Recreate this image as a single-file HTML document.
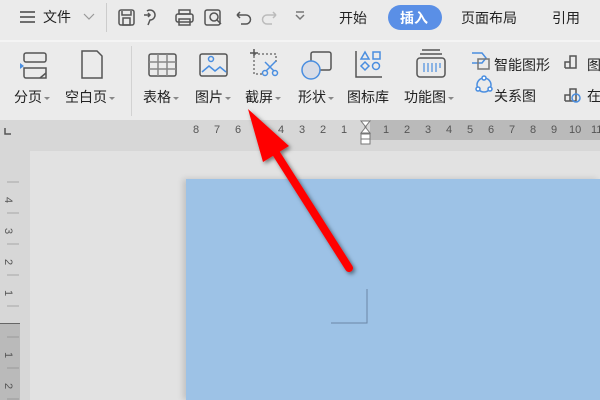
<!DOCTYPE html>
<html><head><meta charset="utf-8"><style>
*{margin:0;padding:0;box-sizing:border-box}
body{width:600px;height:400px;overflow:hidden;background:#e2e2e2;font-family:"Liberation Sans","Noto Sans CJK SC",sans-serif;position:relative;color:#333}
.a{position:absolute}
.t{font-size:14px;color:#222;white-space:nowrap}
.s{font-size:14px;color:#222;white-space:nowrap}
.n{font-size:11px;color:#555}
.dd{display:inline-block;width:0;height:0;border-left:3px solid transparent;border-right:3px solid transparent;border-top:3px solid #888;vertical-align:middle;margin-left:2px}
</style></head><body>
<div class="a" style="left:0;top:0;width:600px;height:40px;background:#ebebeb"></div>
<div class="a" style="left:0;top:40px;width:600px;height:2px;background:#f4f4f4"></div>
<div class="a" style="left:0;top:42px;width:600px;height:78px;background:#ebebeb"></div>
<div class="a" style="left:106px;top:3px;width:1px;height:29px;background:#ccc"></div>
<div class="a" style="left:131px;top:46px;width:1px;height:70px;background:#d2d2d2"></div>
<!-- top row -->
<svg class="a" style="left:18px;top:9px" width="20" height="16"><path d="M2 3h15M2 8h15M2 13h15" stroke="#444" stroke-width="1.5"/></svg>
<div class="a t" style="left:43px;top:7px">文件</div>
<svg class="a" style="left:82px;top:11px" width="14" height="10"><path d="M2 3l5 5 5-5" stroke="#999" fill="none" stroke-width="1.2"/></svg>
<svg class="a" style="left:116px;top:7px" width="200" height="22" fill="none" stroke="#555" stroke-width="1.5">
<rect x="3" y="3" width="15" height="15" rx="2"/><rect x="7" y="11" width="7" height="7"/><path d="M6 4v4h9V4"/>
<path d="M31 4a5 5 0 1 1 3 9l-2 5M28 8h6m-2-2 2 2-2 2"/>
<rect x="60" y="7" width="17" height="8" rx="2"/><rect x="63" y="3" width="11" height="4"/><rect x="63" y="12" width="11" height="6"/>
<rect x="89" y="3" width="15" height="15" rx="2"/><circle cx="98" cy="10" r="4"/><path d="M101 13l4 4"/>
<path d="M121 8h9a4 4 0 0 1 0 9h-5M121 8l3-3M121 8l3 3"/>
<path stroke="#bbb" d="M160 8h-9a4 4 0 0 0 0 9h5M160 8l-3-3M160 8l-3 3"/>
<path stroke="#777" d="M180 8l4 4 4-4M180 5h8"/>
</svg>
<div class="a t" style="left:339px;top:8px">开始</div>
<div class="a" style="left:388px;top:5px;width:54px;height:25px;border-radius:13px;background:#5a8fe6"></div>
<div class="a t" style="left:400px;top:8px;color:#fff;font-weight:bold">插入</div>
<div class="a t" style="left:461px;top:8px">页面布局</div>
<div class="a t" style="left:552px;top:8px">引用</div>
<!-- ribbon icons -->
<svg class="a" style="left:0;top:46px" width="600" height="70" fill="none" stroke="#555" stroke-width="1.5">
<path d="M20 17l4 3-4 3z" fill="#4a8ee0" stroke="none"/>
<rect x="24" y="7" width="22" height="9" rx="2"/><path d="M24 22h22v10H26a2 2 0 0 1-2-2z"/><path d="M40 32l6-5" />
<path d="M82 5h15l5 5v22H82z"/>
<rect x="149" y="8" width="27" height="22" rx="2"/><path d="M149 16h27M149 23h27M158 8v22M167 8v22" stroke="#888"/>
<rect x="200" y="8" width="27" height="22" rx="2"/><circle cx="211" cy="13" r="2.5" stroke="#4a8ee0"/><path d="M202 26l7-6 6 5 5-4 6 5" stroke="#4a8ee0"/>
<path d="M254 8h22v9M254 10v18h9" stroke="#777" stroke-dasharray="2 2"/><path d="M254 3v7M250 7h8" stroke="#555"/>
<circle cx="265" cy="27" r="2.5" stroke="#4a8ee0"/><circle cx="275" cy="27" r="2.5" stroke="#4a8ee0"/><path d="M266 25l10-10M274 25l-9-9" stroke="#4a8ee0"/>
<rect x="311" y="6" width="20" height="18" rx="2"/><circle cx="311" cy="24" r="9" fill="#d8dce6" stroke="#4a8ee0"/>
<path d="M356 5v26h26" /><path d="M361 13l4-7 4 7z M373 6h7v7h-7z M365 16l4 4-4 4-4-4z" stroke="#4a8ee0"/><circle cx="376" cy="20" r="3.5" stroke="#4a8ee0"/>
<rect x="417" y="12" width="28" height="19" rx="3"/><path d="M420 8h22M422 4h18"/><path d="M424 17v9M428 17v9M432 17v9M436 17v9M440 17v5" stroke="#4a8ee0" stroke-width="1.2"/>
<path d="M472 7h10l4 5-4 5h-10" stroke="#4a8ee0"/><rect x="478" y="13" width="11" height="10" stroke="#777"/>
<circle cx="484" cy="39" r="7" stroke="#4a8ee0"/><circle cx="484" cy="32" r="2" fill="#fff" stroke="#4a8ee0"/><circle cx="478" cy="43" r="2" fill="#fff" stroke="#4a8ee0"/><circle cx="490" cy="43" r="2" fill="#fff" stroke="#4a8ee0"/>
<path d="M565 22v-6h5v6M570 22V10h6v12h-11"/>
<path d="M565 55v-6h5v6M570 55V43h6v12h-11"/><circle cx="576" cy="52" r="4" stroke="#4a8ee0"/>
</svg>
<div class="a s" style="left:14px;top:87px">分页<span class="dd"></span></div>
<div class="a s" style="left:65px;top:87px">空白页<span class="dd"></span></div>
<div class="a s" style="left:143px;top:87px">表格<span class="dd"></span></div>
<div class="a s" style="left:195px;top:87px">图片<span class="dd"></span></div>
<div class="a s" style="left:245px;top:87px">截屏<span class="dd"></span></div>
<div class="a s" style="left:298px;top:87px">形状<span class="dd"></span></div>
<div class="a s" style="left:347px;top:87px">图标库</div>
<div class="a s" style="left:404px;top:87px">功能图<span class="dd"></span></div>
<div class="a s" style="left:494px;top:55px">智能图形</div>
<div class="a s" style="left:494px;top:86px">关系图</div>
<div class="a s" style="left:587px;top:55px">图</div>
<div class="a s" style="left:587px;top:86px">在</div>
<!-- rulers -->
<div class="a" style="left:0;top:120px;width:600px;height:31px;background:#d7d7d7"></div>
<div class="a" style="left:370px;top:120px;width:230px;height:20px;background:#bababa"></div>
<div class="a" style="left:0;top:151px;width:30px;height:249px;background:#d7d7d7"></div>
<div class="a" style="left:0;top:323px;width:20px;height:77px;background:#bababa;border-top:1px solid #666"></div>
<svg class="a" style="left:4px;top:128px" width="8" height="8"><path d="M1 0v6h6" stroke="#555" stroke-width="1.5" fill="none"/></svg>
<div class="a n" style="left:193px;top:124px">8</div><div class="a n" style="left:214px;top:124px">7</div><div class="a n" style="left:235px;top:124px">6</div>
<div class="a n" style="left:278px;top:124px">4</div><div class="a n" style="left:299px;top:124px">3</div><div class="a n" style="left:320px;top:124px">2</div><div class="a n" style="left:341px;top:124px">1</div>
<div class="a n" style="left:383px;top:124px">1</div><div class="a n" style="left:404px;top:124px">2</div><div class="a n" style="left:425px;top:124px">3</div><div class="a n" style="left:446px;top:124px">4</div><div class="a n" style="left:467px;top:124px">5</div><div class="a n" style="left:488px;top:124px">6</div><div class="a n" style="left:509px;top:124px">7</div><div class="a n" style="left:530px;top:124px">8</div><div class="a n" style="left:551px;top:124px">9</div><div class="a n" style="left:569px;top:124px">10</div><div class="a n" style="left:591px;top:124px">11</div>
<svg class="a" style="left:359px;top:120px" width="14" height="26"><path d="M2 1h9l-4 5v2l4 5H2l4-5V6z" fill="#fff" stroke="#777"/><rect x="2" y="14" width="9" height="10" fill="#fff" stroke="#777"/><path d="M2 19h9" stroke="#777"/></svg>
<div class="a n" style="left:5px;top:194px;transform:rotate(90deg)">4</div>
<div class="a n" style="left:5px;top:225px;transform:rotate(90deg)">3</div>
<div class="a n" style="left:5px;top:256px;transform:rotate(90deg)">2</div>
<div class="a n" style="left:5px;top:287px;transform:rotate(90deg)">1</div>
<div class="a n" style="left:5px;top:349px;transform:rotate(90deg)">1</div>
<div class="a n" style="left:5px;top:380px;transform:rotate(90deg)">2</div>
<svg class="a" style="left:0;top:151px" width="20" height="249"><path d="M7 248h12M7 217h12M7 186h12M7 155h12M7 124h12M7 93h12M7 62h12M7 31h12" stroke="#888" opacity=".6"/></svg>
<!-- page -->
<div class="a" style="left:186px;top:179px;width:414px;height:221px;background:#9dc2e6;box-shadow:-3px 0 6px rgba(0,0,0,.15)"></div>
<svg class="a" style="left:330px;top:289px" width="40" height="40"><path d="M1 34h36V0" stroke="#6a87a6" fill="none"/></svg>
<!-- arrow -->
<svg class="a" style="left:0;top:0" width="600" height="400">
<defs><filter id="f"><feDropShadow dx="2" dy="2" stdDeviation="2" flood-color="#000" flood-opacity=".5"/></filter></defs>
<g filter="url(#f)"><path d="M349 268L274 150" stroke="#f00" stroke-width="8" stroke-linecap="round"/><path d="M248 109L289 146L263 162Z" fill="#f00"/></g>
</svg>
</body></html>
